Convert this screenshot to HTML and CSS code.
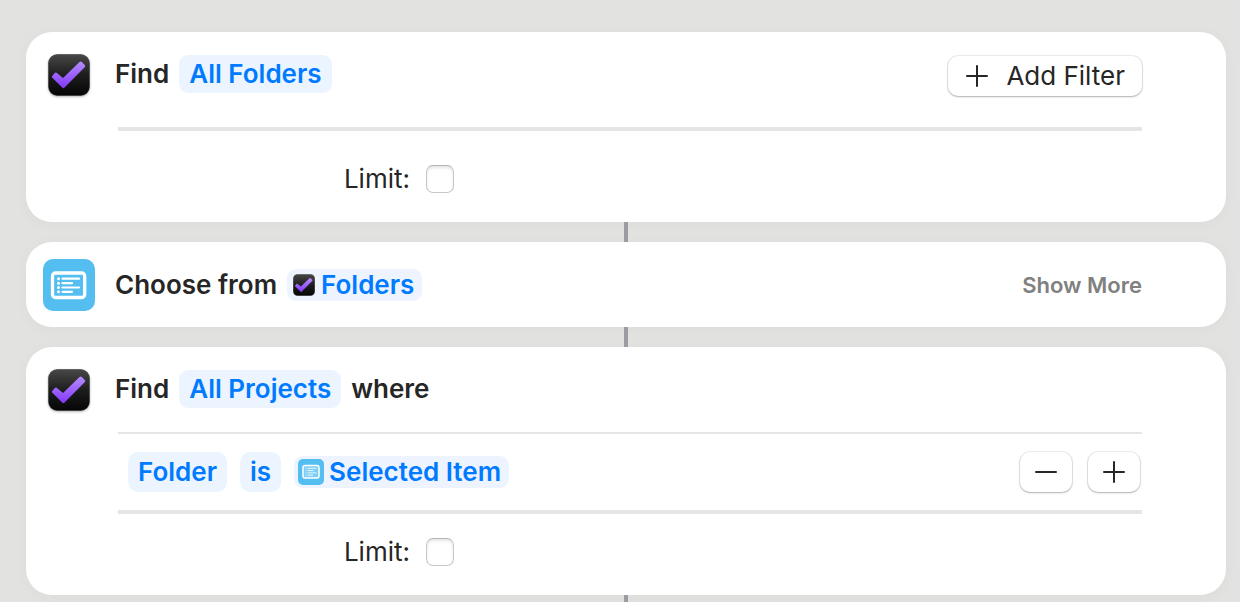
FILE: index.html
```html
<!DOCTYPE html>
<html lang="en">
<head>
<meta charset="utf-8">
<title>Shortcut editor</title>
<link rel="stylesheet" href="styles.css">
</head>
<body>
<svg class="defs" width="0" height="0" aria-hidden="true">
  <defs>
    <linearGradient id="tile" x1="0" y1="0" x2="0" y2="1">
      <stop offset="0" stop-color="#484848"/>
      <stop offset="0.5" stop-color="#1d1d1d"/>
      <stop offset="1" stop-color="#050505"/>
    </linearGradient>
    <linearGradient id="tick" x1="0" y1="0" x2="0" y2="1">
      <stop offset="0" stop-color="#b58cff"/>
      <stop offset="1" stop-color="#8238f8"/>
    </linearGradient>
    <symbol id="check-app" viewBox="0 0 42 42">
      <rect x="0.3" y="0.3" width="41.400" height="41.400" rx="9" fill="url(#tile)" stroke="#555" stroke-width="0.6"/>
      <path d="M4.200 22L7 18.800Q8 18 9 18.900L15 24L31.500 8Q32.700 7 33.800 8L36.800 11Q37.700 12.100 36.700 13.300L16.300 33.700Q15.200 34.600 14.200 33.600L4.300 23.800Q3.400 23 4.200 22Z" fill="url(#tick)"/>
    </symbol>
    <symbol id="list-app" viewBox="0 0 52 52">
      <rect width="52" height="52" rx="10" fill="#55bef0"/>
      <rect x="9.500" y="14" width="32.200" height="24.500" rx="3" fill="none" stroke="#fff" stroke-width="3.300"/>
      <g fill="#fff"><circle cx="15.500" cy="19.700" r="1.500"/><circle cx="15.500" cy="24.200" r="1.500"/><circle cx="15.500" cy="28.500" r="1.500"/><circle cx="15.500" cy="32.800" r="1.500"/></g>
      <path d="M19.500 19.700H36M19.500 24.200H29M19.500 28.500H36M19.500 32.800H29" stroke="#fff" stroke-width="2.200" stroke-linecap="round"/>
    </symbol>
  </defs>
</svg>
<main class="workflow">
  <section class="card">
    <header class="card-head">
      <svg class="app-icon app-icon-check" aria-hidden="true"><use href="#check-app"/></svg>
      <div class="sentence"><span>Find</span><button class="token">All Folders</button></div>
      <button class="push push-wide"><svg class="glyph" viewBox="0 0 22 22" aria-hidden="true"><path d="M11 1V21M1 11H21"/></svg>Add Filter</button>
    </header>
    <div class="params params-tall">
      <div class="limit limit-tall"><label for="limit-folders">Limit:</label><input class="tickbox" type="checkbox" id="limit-folders"></div>
    </div>
  </section>
  <div class="connector"></div>
  <section class="card">
    <header class="card-head card-head-only">
      <svg class="app-icon" aria-hidden="true"><use href="#list-app"/></svg>
      <div class="sentence"><span>Choose from</span><button class="token token-variable"><svg class="mini mini-check" aria-hidden="true"><use href="#check-app"/></svg>Folders</button></div>
      <button class="more">Show More</button>
    </header>
  </section>
  <div class="connector"></div>
  <section class="card">
    <header class="card-head card-head-short">
      <svg class="app-icon app-icon-check" aria-hidden="true"><use href="#check-app"/></svg>
      <div class="sentence"><span>Find</span><button class="token">All Projects</button><span>where</span></div>
    </header>
    <div class="params">
      <div class="filter">
        <button class="token token-filter">Folder</button>
        <button class="token token-filter">is</button>
        <button class="token token-variable"><svg class="mini" viewBox="0 0 26 26" aria-hidden="true"><rect width="26" height="26" rx="5" fill="#55bef0"/><rect x="5" y="6.500" width="16" height="12.500" rx="2" fill="#7dcdf4" stroke="#fff" stroke-width="1.500"/><path d="M7.500 9.300H8.500M7.500 11.600H8.500M7.500 13.900H8.500M7.500 16.200H8.500M9.500 9.300H18.500M9.500 11.600H15.500M9.500 13.900H18.500M9.500 16.200H15" stroke="#e3f5fd" stroke-width="1"/></svg>Selected Item</button>
        <div class="steppers">
          <button class="push push-small" aria-label="Remove filter"><svg class="glyph" viewBox="0 0 22 22" aria-hidden="true"><path d="M1 11H21"/></svg></button>
          <button class="push push-small" aria-label="Add filter"><svg class="glyph" viewBox="0 0 22 22" aria-hidden="true"><path d="M11 1V21M1 11H21"/></svg></button>
        </div>
      </div>
      <div class="limit"><label for="limit-projects">Limit:</label><input class="tickbox" type="checkbox" id="limit-projects"></div>
    </div>
  </section>
  <div class="connector connector-last"></div>
</main>
</body>
</html>
```
FILE: styles.css
```css
* { box-sizing: border-box; }
html { height: 100%; }
body {
  margin: 0;
  height: 100%;
  overflow: hidden;
  background: #e2e2e0;
  color: #262626;
  font: 400 26px/38px Inter, "Liberation Sans", sans-serif;
}
button, input { margin: 0; font: inherit; color: inherit; }
button { border: 0; padding: 0; background: none; white-space: nowrap; }
svg { display: block; flex: none; }
.defs { position: absolute; }
.workflow { padding: 32px 14px 0 26px; }
.card {
  padding: 0 84px 0 17px;
  border-radius: 26px;
  background: #fff;
  box-shadow: 0 2px 16px rgba(0, 0, 0, 0.03);
}
.connector { width: 4px; height: 20px; margin: 0 auto; background: #9a9ba3; position: relative; }
.connector-last { height: 7px; }

.card-head { display: flex; align-items: flex-start; height: 95px; padding-top: 23px; }
.card-head-short { height: 85px; }
.card-head-only { height: 85px; padding-top: 0; align-items: center; }
.app-icon { width: 52px; height: 52px; }
.app-icon-check {
  width: 42px;
  height: 42px;
  margin: -1px 5px 0;
  border-radius: 9px;
  filter: drop-shadow(0 1px 1px rgba(0, 0, 0, 0.3));
}
.sentence { display: flex; align-items: center; gap: 10px; margin-left: 20px; font-weight: 600; }
.token {
  height: 38px;
  padding: 0 10px;
  border-radius: 9px;
  background: #ecf5ff;
  color: #007aff;
  font-weight: 600;
}
.token-filter { height: 40px; border-radius: 10px; }
.token-variable {
  display: flex;
  align-items: center;
  gap: 5px;
  height: 32px;
  padding: 0 8px 0 4px;
  border-radius: 9px;
  background: #eef4ff;
  line-height: 32px;
}
.mini { width: 26px; height: 26px; }
.mini-check { width: 22px; height: 22px; margin: 0 1px 0 2px; }
.more { margin-left: auto; color: #808080; font-size: 22px; font-weight: 600; }

.push {
  display: flex;
  align-items: center;
  justify-content: center;
  height: 40px;
  border-radius: 10px;
  background: #fff;
  box-shadow: 0 0 0 1px rgba(0, 0, 0, 0.07), 0 1px 2px rgba(0, 0, 0, 0.25);
}
.push-wide { gap: 18px; margin: 1px 0 0 auto; padding: 0 17px 0 18px; }
.push-small { width: 52px; }
.glyph { width: 22px; height: 22px; fill: none; stroke: #262626; stroke-width: 2; stroke-linecap: round; }

.params { margin-left: 75px; border-top: 2px solid #e5e5e5; }
.params-tall { border-top-width: 4px; }
.filter { display: flex; align-items: center; gap: 13px; height: 80px; padding: 0 2px 0 10px; border-bottom: 4px solid #e5e5e5; }
.steppers { display: flex; gap: 16px; margin-left: auto; }
.limit { display: flex; align-items: center; gap: 16px; padding: 19px 0 24px; }
.limit-tall { padding-top: 29px; }
.limit label { width: 292px; text-align: right; }
.tickbox {
  appearance: none;
  width: 28px;
  height: 28px;
  border: 1px solid #c8c8c8;
  border-top-color: #b4b4b4;
  border-radius: 7px;
  background: #fff;
  box-shadow: inset 0 2px 3px rgba(0, 0, 0, 0.1);
}
```
